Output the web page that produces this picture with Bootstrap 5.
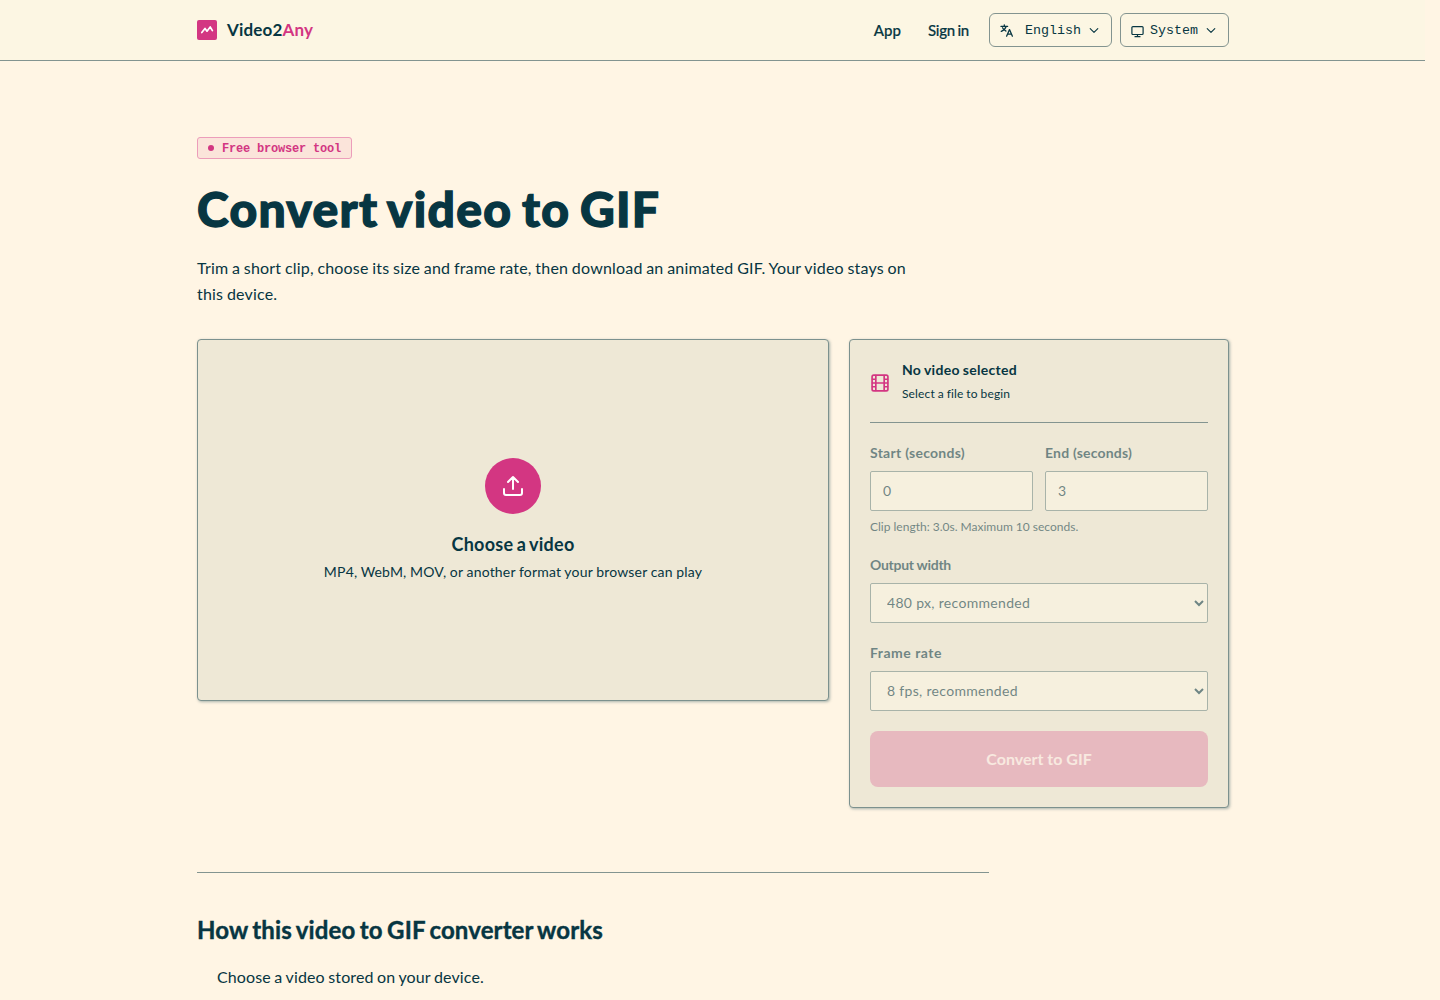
<!DOCTYPE html>
<html lang="en">
<head>
<meta charset="utf-8">
<meta name="viewport" content="width=device-width, initial-scale=1">
<title>Convert video to GIF - Video2Any</title>
<link href="https://cdn.jsdelivr.net/npm/bootstrap@5.3.0/dist/css/bootstrap.min.css" rel="stylesheet">
<style>
:root{--ink:#073642;--pink:#d33682;--line:#839490;--paper:#fff5e4;--panel:#eee8d6}
html{overflow:hidden}
body{font-family:Lato,"Open Sans",sans-serif;color:var(--ink);background:var(--paper);padding-right:15px;height:1000px;overflow:hidden}
svg{display:block;flex:none;fill:none;stroke:currentColor;stroke-linecap:round;stroke-linejoin:round}
.wrap{width:1032px;margin:0 0 0 197px}
.topbar{height:61px;background:#fcf6e3;border-bottom:1px solid var(--line)}
.brand{gap:10px;font-size:17px;font-weight:700;line-height:24px;letter-spacing:.16px;color:var(--ink);text-decoration:none}
.brand .pink{color:var(--pink)}
.toplink{font-size:15px;font-weight:500;line-height:20px;color:var(--ink);text-decoration:none;-webkit-text-stroke:.2px var(--ink)}
.signin{margin:0 20px 0 27px;letter-spacing:-.25px;word-spacing:-1px}
.picker{height:34px;border:1px solid var(--line);border-radius:6px;background:transparent;color:var(--ink);font:13.33px/20px "Liberation Mono",monospace;padding:1px 12px 0 10px}
.pill{width:155px;height:22px;border:1px solid #ec9dba;border-radius:3px;background:#fbe4da;color:var(--pink);font:bold 12px/20px "Liberation Mono",monospace;letter-spacing:-.2px;padding:1px 10px 0;margin-top:76px}
.dot{width:6px;height:6px;border-radius:50%;background:var(--pink);margin-top:-1px}
h1{font-size:48px;font-weight:900;line-height:53px;margin:23px 0 20px;letter-spacing:1.3px;word-spacing:-3px;-webkit-text-stroke:1.3px var(--ink)}
.intro{width:730px;font-size:16px;line-height:26px;letter-spacing:.19px;word-spacing:-.6px;margin:0 0 32px}
.panel{background:var(--panel);border:1px solid #7c918e;border-radius:4px;box-shadow:1px 1px 3px rgba(7,54,66,.35)}
.drop{width:632px;height:362px}
.side{width:380px;padding:20px}
.disc{width:56px;height:56px;border-radius:50%;background:var(--pink);color:#fff}
.droptitle{font-size:18px;font-weight:700;line-height:28px;letter-spacing:.28px;word-spacing:-1.4px;margin-top:16px}
.dropsub{font-size:14px;line-height:20px;letter-spacing:.18px;word-spacing:-.2px;margin-top:4px}
.filebox{gap:12px;padding-bottom:16px;border-bottom:1px solid var(--line);margin-bottom:20px;height:63px}
.filebox svg{color:var(--pink)}
.filetext{padding-bottom:2px}
.filetitle{font-size:14px;font-weight:700;line-height:20px;letter-spacing:.3px;word-spacing:-.7px}
.filesub{font-size:12px;line-height:20px;letter-spacing:.15px;word-spacing:-.4px;margin-top:4px}
.off{border:0;opacity:.55}
.lab{display:block;font-size:14px;font-weight:700;line-height:20px;margin-bottom:8px}
.field{display:block;width:100%;height:40px;border:1px solid #6f8886;border-radius:2px;background:#fdf8e6;color:var(--ink);font-size:14px;letter-spacing:.31px;padding:0 12px 2px;opacity:1}
.hint{font-size:12px;line-height:20px;margin:6px 0 18px}
.go{display:block;width:100%;height:56px;border:0;border-radius:8px;background:#e7b9bf;color:#f8e9e0;font-size:16px;font-weight:700;margin-top:20px}
.how{width:792px;border-top:1px solid var(--line);margin-top:64px;padding-top:41px}
h2{font-size:24px;font-weight:700;line-height:32px;letter-spacing:.12px;word-spacing:-1.5px;-webkit-text-stroke:.4px var(--ink);margin:0 0 18px}
.step{font-size:16px;line-height:26px;letter-spacing:.12px;word-spacing:-.7px;padding-left:20px}
</style>
<script src="https://cdn.jsdelivr.net/npm/bootstrap@5.3.0/dist/js/bootstrap.bundle.min.js"></script>
</head>
<body>
<header class="topbar">
  <div class="wrap d-flex align-items-center h-100">
    <a class="brand d-flex align-items-center" href="#">
      <svg width="20" height="20" viewBox="0 0 20 20"><rect width="20" height="20" rx="2" fill="#d33682" stroke="none"/><path d="M4.8 12.6 8 8.4l2 2.8L13.2 7l2.2 3.6" stroke="#fff" stroke-width="1.7"/></svg>
      <span>Video2<span class="pink">Any</span></span>
    </a>
    <nav class="d-flex align-items-center ms-auto">
      <a class="toplink" href="#">App</a>
      <a class="toplink signin" href="#">Sign in</a>
      <button type="button" class="picker d-flex align-items-center">
        <svg width="14" height="14" viewBox="0 0 14 14" stroke-width="1.3" stroke-linecap="butt"><path d="M1 2.4h6.6M4.3.8v1.6M6.2 2.4C5.5 4.6 3.8 6.3 1.3 7.4M2.5 3.8C3.3 5.3 4.5 6.5 6 7.1M6.6 12.2 9.5 5.6l2.9 6.6M7.6 10.2h3.8"/></svg>
        <span style="margin:0 8px 0 11px">English</span>
        <svg width="10" height="10" viewBox="0 0 10 10" stroke-width="1.1"><path d="m1.2 2.6 3.8 3.8 3.8-3.8"/></svg>
      </button>
      <button type="button" class="picker d-flex align-items-center ms-2">
        <svg width="13" height="14" viewBox="0 0 13 14" stroke-width="1.2"><rect x=".9" y="2.6" width="11.2" height="7.9" rx="1"/><path d="M6.5 10.5v2M4 12.7h5"/></svg>
        <span style="margin:0 8px 0 6px">System</span>
        <svg width="10" height="10" viewBox="0 0 10 10" stroke-width="1.1"><path d="m1.2 2.6 3.8 3.8 3.8-3.8"/></svg>
      </button>
    </nav>
  </div>
</header>
<main class="wrap">
  <div class="pill d-flex align-items-center gap-2"><i class="dot"></i><span class="text-nowrap">Free browser tool</span></div>
  <h1>Convert video to GIF</h1>
  <p class="intro">Trim a short clip, choose its size and frame rate, then download an animated GIF. Your video stays on<br>this device.</p>
  <div class="d-flex align-items-start justify-content-between">
    <section class="panel drop d-flex flex-column align-items-center justify-content-center">
      <div class="disc d-flex align-items-center justify-content-center">
        <svg width="24" height="24" viewBox="0 0 24 24" stroke-width="2"><path d="M12 15V3M7 8l5-5 5 5M3 15v4a2 2 0 0 0 2 2h14a2 2 0 0 0 2-2v-4"/></svg>
      </div>
      <div class="droptitle">Choose a video</div>
      <div class="dropsub">MP4, WebM, MOV, or another format your browser can play</div>
    </section>
    <section class="panel side">
      <div class="filebox d-flex align-items-center">
        <svg width="20" height="20" viewBox="0 0 24 24" stroke-width="2"><rect x="2.5" y="2.5" width="19" height="19" rx="2"/><path d="M7 3v18M17 3v18M3 7.5h4M3 12h18M3 16.5h4M17 7.5h4M17 16.5h4"/></svg>
        <div class="filetext"><div class="filetitle">No video selected</div><div class="filesub">Select a file to begin</div></div>
      </div>
      <fieldset class="off" disabled>
        <div class="d-flex" style="gap:12px">
          <div class="flex-fill w-50"><label class="lab" for="start" style="letter-spacing:.27px">Start (seconds)</label><input class="field" id="start" value="0"></div>
          <div class="flex-fill w-50"><label class="lab" for="end" style="letter-spacing:.19px">End (seconds)</label><input class="field" id="end" value="3"></div>
        </div>
        <div class="hint">Clip length: 3.0s. Maximum 10 seconds.</div>
        <label class="lab" for="width" style="letter-spacing:-.28px">Output width</label>
        <select class="field" id="width"><option>480 px, recommended</option></select>
        <label class="lab" for="rate" style="letter-spacing:.5px;margin-top:20px">Frame rate</label>
        <select class="field" id="rate"><option>8 fps, recommended</option></select>
      </fieldset>
      <button type="button" class="go" disabled>Convert to GIF</button>
    </section>
  </div>
  <section class="how">
    <h2>How this video to GIF converter works</h2>
    <div class="step">Choose a video stored on your device.</div>
  </section>
</main>
</body>
</html>
